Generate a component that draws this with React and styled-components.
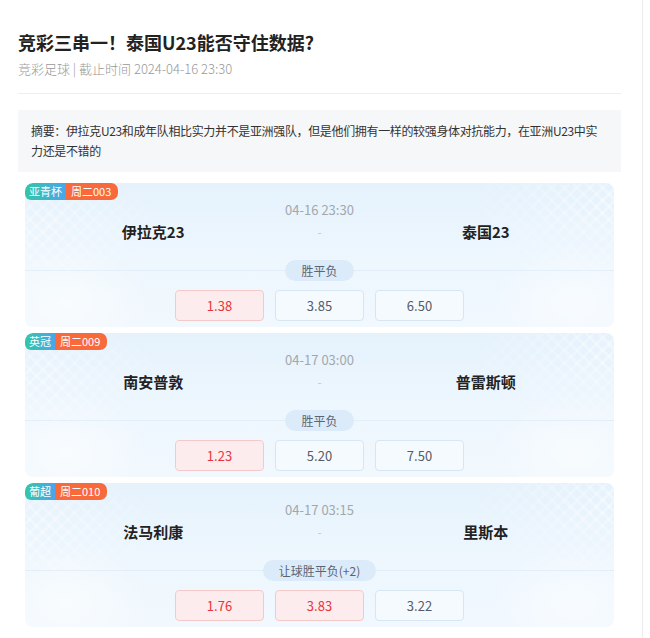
import styled, { createGlobalStyle, css } from 'styled-components';

const GlobalStyle = createGlobalStyle`
  body {
    margin: 0;
    background: #fff;
    font-family: 'Noto Sans CJK SC', 'Noto Sans', sans-serif;
    color: #333;
  }
`;

const Page = styled.div`
  box-sizing: border-box;
  width: 643px;
  min-height: 638px;
  border-right: 1px solid #ececec;
  padding: 28px 21px 0 18px;
`;

const Title = styled.h1`
  margin: 0;
  font-size: 18px;
  line-height: 28px;
  font-weight: 700;
  color: #222;
`;

const Meta = styled.div`
  margin-top: 4px;
  font-size: 13px;
  line-height: 18px;
  font-weight: 300;
  color: #999;
`;

const Divider = styled.div`
  margin-top: 15px;
  height: 1px;
  background: #eeeeee;
`;

const Summary = styled.div`
  margin-top: 16px;
  padding: 11px 13px;
  background: #f6f7f9;
  font-size: 12px;
  line-height: 20px;
  letter-spacing: -0.35px;
  color: #333;
`;

const CardList = styled.div`
  display: flex;
  flex-direction: column;
  gap: 6px;
  margin: 11px 7px 0;
`;

const Card = styled.div`
  position: relative;
  overflow: hidden;
  height: 144px;
  box-sizing: border-box;
  padding-top: 19px;
  border-radius: 8px;
  background:
    radial-gradient(ellipse 120px 90px at 40px 120px, rgba(255, 255, 255, 0.55), transparent 70%),
    radial-gradient(ellipse 120px 90px at 550px 120px, rgba(255, 255, 255, 0.5), transparent 70%),
    linear-gradient(180deg, #e5f2fc 0%, #eef7fe 55%, #f1f8fe 100%);

  &::before,
  &::after {
    content: '';
    position: absolute;
    top: 0;
    width: 150px;
    height: 110px;
    background-image:
      repeating-linear-gradient(45deg, rgba(255, 255, 255, 0.35) 0 3px, transparent 3px 9px),
      repeating-linear-gradient(-45deg, rgba(255, 255, 255, 0.35) 0 3px, transparent 3px 9px);
    pointer-events: none;
  }

  &::before {
    left: 0;
    -webkit-mask-image: radial-gradient(ellipse at 0% 40%, #000 0%, transparent 70%);
    mask-image: radial-gradient(ellipse at 0% 40%, #000 0%, transparent 70%);
  }

  &::after {
    right: 0;
    -webkit-mask-image: radial-gradient(ellipse at 100% 20%, #000 0%, transparent 70%);
    mask-image: radial-gradient(ellipse at 100% 20%, #000 0%, transparent 70%);
  }
`;

const Badge = styled.div`
  position: absolute;
  top: 0;
  left: 0;
  z-index: 2;
  display: flex;
  height: 17px;
  font-size: 11px;
  line-height: 17px;
  color: #fff;
`;

const League = styled.span`
  padding: 0 4px;
  border-radius: 8px 0 0 6px;
  background: linear-gradient(90deg, #33c6a6 0%, #4aa6ec 100%);
`;

const Issue = styled.span`
  padding: 0 7px 0 5px;
  border-radius: 0 7px 7px 0;
  background: #f8693c;
`;

const Time = styled.div`
  position: relative;
  z-index: 1;
  text-align: center;
  font-size: 13px;
  line-height: 16px;
  color: #a3a7ad;
`;

const Teams = styled.div`
  position: relative;
  z-index: 1;
  display: grid;
  grid-template-columns: 1fr 1fr 1fr;
  align-items: center;
  margin-top: 3px;
  padding: 0 45px;
  line-height: 22px;
  text-align: center;
`;

const Team = styled.div`
  font-size: 15px;
  font-weight: 700;
  color: #222;
`;

const Dash = styled.div`
  font-size: 12px;
  color: #c4c8cc;
`;

const PlayRow = styled.div`
  position: relative;
  z-index: 1;
  display: flex;
  justify-content: center;
  margin-top: 17px;

  &::before {
    content: '';
    position: absolute;
    left: 0;
    right: 0;
    top: 10px;
    height: 1px;
    background: rgba(220, 234, 247, 0.7);
  }
`;

const Play = styled.span`
  position: relative;
  height: 21px;
  padding: 0 16px;
  border-radius: 11px;
  background: #dcebf9;
  font-size: 12px;
  line-height: 21px;
  color: #5b6472;
`;

const Odds = styled.div`
  position: relative;
  z-index: 1;
  display: flex;
  justify-content: center;
  gap: 11px;
  margin-top: 9px;
`;

const Odd = styled.div`
  box-sizing: border-box;
  width: 89px;
  height: 31px;
  border-radius: 4px;
  font-size: 13px;
  line-height: 29px;
  text-align: center;
  border: 1px solid #d7e6f4;
  background: #f5faff;
  color: #555b66;

  ${({ $hit }) =>
    $hit &&
    css`
      border-color: #f6c9c9;
      background: #fdeced;
      color: #e8343a;
    `}
`;

const matches = [
  {
    league: '亚青杯',
    issue: '周二003',
    time: '04-16 23:30',
    home: '伊拉克23',
    away: '泰国23',
    play: '胜平负',
    odds: [
      { value: '1.38', hit: true },
      { value: '3.85' },
      { value: '6.50' },
    ],
  },
  {
    league: '英冠',
    issue: '周二009',
    time: '04-17 03:00',
    home: '南安普敦',
    away: '普雷斯顿',
    play: '胜平负',
    odds: [
      { value: '1.23', hit: true },
      { value: '5.20' },
      { value: '7.50' },
    ],
  },
  {
    league: '葡超',
    issue: '周二010',
    time: '04-17 03:15',
    home: '法马利康',
    away: '里斯本',
    play: '让球胜平负(+2)',
    odds: [
      { value: '1.76', hit: true },
      { value: '3.83', hit: true },
      { value: '3.22' },
    ],
  },
];

function MatchCard({ match }) {
  return (
    <Card>
      <Badge>
        <League>{match.league}</League>
        <Issue>{match.issue}</Issue>
      </Badge>
      <Time>{match.time}</Time>
      <Teams>
        <Team>{match.home}</Team>
        <Dash>-</Dash>
        <Team>{match.away}</Team>
      </Teams>
      <PlayRow>
        <Play>{match.play}</Play>
      </PlayRow>
      <Odds>
        {match.odds.map((o, i) => (
          <Odd key={i} $hit={o.hit}>
            {o.value}
          </Odd>
        ))}
      </Odds>
    </Card>
  );
}

export default function App() {
  return (
    <>
      <GlobalStyle />
      <Page>
        <Title>竞彩三串一！泰国U23能否守住数据?</Title>
        <Meta>竞彩足球 | 截止时间 2024-04-16 23:30</Meta>
        <Divider />
        <Summary>
          摘要：伊拉克U23和成年队相比实力并不是亚洲强队，但是他们拥有一样的较强身体对抗能力，在亚洲U23中实力还是不错的
        </Summary>
        <CardList>
          {matches.map((m) => (
            <MatchCard key={m.issue} match={m} />
          ))}
        </CardList>
      </Page>
    </>
  );
}
